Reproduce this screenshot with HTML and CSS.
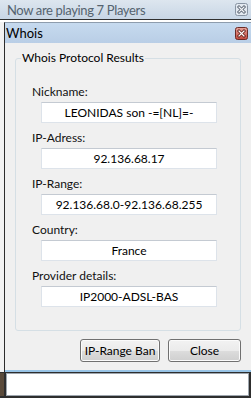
FILE: index.html
```html
<!DOCTYPE html>
<html lang="en">
<head>
  <meta charset="UTF-8" />
  <meta name="viewport" content="width=device-width, initial-scale=1.0"/>
  <title>Whois</title>
  <link rel="stylesheet" href="styles.css">
</head>
<body>
  <div class="backbar">
    <span class="backbar-title">Now are playing 7 Players</span>
    <span class="caption-btn">
      <svg width="13" height="13" viewBox="0 0 13 13">
        <rect x="0.5" y="0.5" width="12" height="12" rx="2" fill="#e3e9f0" stroke="#8894a3"/>
        <path d="M4 4l5 5M9 4l-5 5" stroke="#5b6573" stroke-width="3" stroke-linecap="square"/>
        <path d="M4 4l5 5M9 4l-5 5" stroke="#f4f6f8" stroke-width="1.2" stroke-linecap="square"/>
      </svg>
    </span>
  </div>

  <div class="under">
    <div class="under-list"></div>

    <div class="dialog">
      <div class="dialog-title">
        <span>Whois</span>
        <span class="caption-btn">
          <svg width="13" height="13" viewBox="0 0 13 13">
            <defs>
              <linearGradient id="red" x1="0" y1="0" x2="0" y2="1">
                <stop offset="0" stop-color="#e8a59c"/>
                <stop offset="1" stop-color="#c0463b"/>
              </linearGradient>
            </defs>
            <rect x="0.5" y="0.5" width="12" height="12" rx="2" fill="url(#red)" stroke="#6b2b26"/>
            <path d="M4 4l5 5M9 4l-5 5" stroke="#6b2620" stroke-width="3" stroke-linecap="square"/>
            <path d="M4 4l5 5M9 4l-5 5" stroke="#ffffff" stroke-width="1.2" stroke-linecap="square"/>
          </svg>
        </span>
      </div>

      <div class="dialog-body">
        <fieldset class="group">
          <legend>Whois Protocol Results</legend>
          <div class="group-body">
            <div class="field">
              <label for="nick">Nickname:</label>
              <input class="field-box" id="nick" value="LEONIDAS son -=[NL]=-" readonly />
            </div>
            <div class="field">
              <label for="ip">IP-Adress:</label>
              <input class="field-box" id="ip" value="92.136.68.17" readonly />
            </div>
            <div class="field">
              <label for="range">IP-Range:</label>
              <input class="field-box" id="range" value="92.136.68.0-92.136.68.255" readonly />
            </div>
            <div class="field">
              <label for="country">Country:</label>
              <input class="field-box" id="country" value="France" readonly />
            </div>
            <div class="field">
              <label for="provider">Provider details:</label>
              <input class="field-box" id="provider" value="IP2000-ADSL-BAS" readonly />
            </div>
          </div>
        </fieldset>

        <div class="actions">
          <button class="btn btn-ban">IP-Range Ban</button>
          <button class="btn btn-close">Close</button>
        </div>
      </div>
    </div>
  </div>

  <div class="bottom">
    <div class="bottom-edge"></div>
    <div class="chat-box"></div>
  </div>
</body>
</html>
```

FILE: styles.css
```css
html, body {
  margin: 0;
  padding: 0;
}
body {
  width: 251px;
  height: 398px;
  overflow: hidden;
  background-color: #2e2e2e;
  font-family: Lato, 'Noto Sans', sans-serif;
  font-size: 12px;
  color: #111;
}
.backbar {
  height: 19px;
  display: flex;
  align-items: center;
  justify-content: space-between;
  padding: 0 3px 0 7px;
  background: linear-gradient(#dde6ef, #c8d6e5);
}
.backbar-title {
  font-size: 13px;
  letter-spacing: -0.35px;
  color: #55636f;
}
.caption-btn {
  display: flex;
  width: 13px;
  height: 13px;
}
.under {
  display: flex;
  border-top: 1px solid #303030;
  padding-top: 2px;
  background-color: #ffffff;
}
.under-list {
  width: 4px;
  background-color: #f2f2f2;
}
.dialog {
  flex: 1;
  border-left: 1px solid #2c2c2c;
  border-top: 1px solid #8d9cad;
}
.dialog-title {
  height: 20px;
  display: flex;
  align-items: center;
  justify-content: space-between;
  padding: 0 3px 0 1px;
  font-size: 13px;
  color: #000;
  background: linear-gradient(#c6daef, #b9cee6);
}
.dialog-body {
  background-color: #f0f0f0;
  padding: 7px 10px 8px 10px;
  border-bottom: 2px solid #98c4e6;
}
.group {
  margin: 0;
  padding: 0;
  border: 1px solid #d5dfe5;
  border-radius: 3px;
  min-width: 0;
}
.group legend {
  margin-left: 5px;
  padding: 0 1px;
  line-height: 16px;
  font-size: 12px;
  color: #000;
}
.group-body {
  display: flex;
  flex-direction: column;
  gap: 7px;
  padding: 18px 0 23px 16px;
}
.field {
  display: flex;
  flex-direction: column;
  gap: 3px;
}
.field label {
  line-height: 15px;
  color: #111;
}
.field-box {
  box-sizing: border-box;
  width: 176px;
  height: 21px;
  margin: 0 0 0 9px;
  padding: 0 4px;
  border: 1px solid #dde3ea;
  border-top-color: #c4cad2;
  background-color: #ffffff;
  font-family: Lato, 'Noto Sans', sans-serif;
  font-size: 12px;
  color: #000;
  text-align: center;
  outline: none;
}
.actions {
  display: flex;
  justify-content: flex-end;
  gap: 8px;
  margin-top: 8px;
}
.btn {
  height: 23px;
  padding: 0;
  border: 1px solid #707070;
  border-radius: 3px;
  background: linear-gradient(#f2f2f2 0%, #ebebeb 50%, #dddddd 50%, #cfcfcf 100%);
  box-shadow: inset 0 0 0 1px #fbfbfb;
  font-family: Lato, 'Noto Sans', sans-serif;
  font-size: 12px;
  color: #000;
}
.btn-ban {
  width: 80px;
}
.btn-close {
  width: 73px;
}
.bottom {
  display: flex;
  height: 26px;
  box-sizing: border-box;
  padding: 1px 2px 2px 0;
}
.bottom-edge {
  width: 4px;
  background-color: #5a4a3a;
}
.chat-box {
  flex: 1;
  margin-left: 2px;
  background-color: #ffffff;
  border: 1px solid #9ea6ae;
}
```
